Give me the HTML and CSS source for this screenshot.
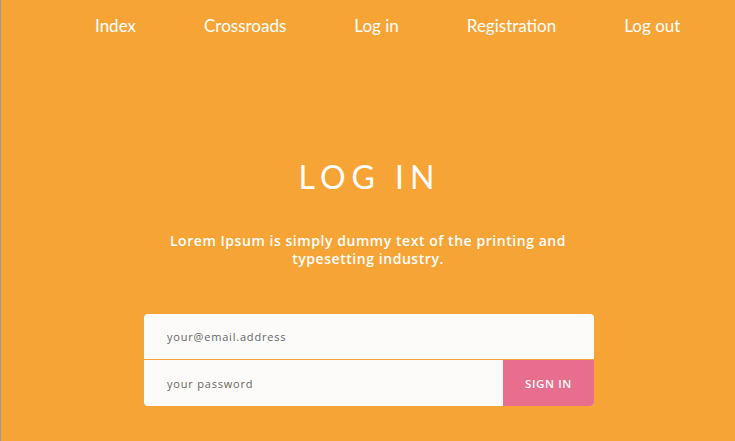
FILE: index.html
```html
<!DOCTYPE html>
<html lang="en">
<head>
<meta charset="utf-8">
<title>Log in</title>
<link rel="stylesheet" href="styles.css">
</head>
<body>
<div class="page">
  <nav class="nav">
    <a href="#">Index</a>
    <a href="#">Crossroads</a>
    <a href="#">Log in</a>
    <a href="#">Registration</a>
    <a href="#">Log out</a>
  </nav>
  <main class="main">
    <h1 class="title">LOG IN</h1>
    <p class="lead">Lorem Ipsum is simply dummy text of the printing and<br>typesetting industry.</p>
    <form class="form">
      <div class="row">
        <input class="field" type="email" placeholder="your@email.address">
      </div>
      <div class="row row-last">
        <input class="field" type="password" placeholder="your password">
        <button class="btn" type="button">SIGN IN</button>
      </div>
    </form>
  </main>
</div>
</body>
</html>
```
FILE: styles.css
```css
html, body {
  margin: 0;
  padding: 0;
  height: 100%;
}
body {
  background: #f7a436;
  font-family: "Lato", "Open Sans", sans-serif;
  color: #fff;
  overflow: hidden;
}
.page {
  min-height: 100%;
  border-left: 1px solid #9b9b9b;
  box-sizing: border-box;
}
.nav {
  display: flex;
  gap: 68px;
  padding: 16px 0 0 94px;
  height: 20px;
}
.nav a {
  color: #fff;
  text-decoration: none;
  font-size: 17px;
  line-height: 20px;
}
.main {
  display: flex;
  flex-direction: column;
  align-items: center;
}
.title {
  margin: 122px 0 0 3px;
  font-weight: 400;
  font-size: 32px;
  line-height: 38px;
  letter-spacing: 6px;
}
.lead {
  margin: 36px 0 0;
  text-align: center;
  font-family: "Open Sans", sans-serif;
  font-weight: 600;
  font-size: 14px;
  line-height: 18px;
  letter-spacing: 0.55px;
}
.form {
  margin: 46px 0 0 2px;
  width: 450px;
  background: #fdfbfa;
  border-radius: 4px;
  overflow: hidden;
}
.row {
  display: flex;
  height: 45px;
  border-bottom: 1px solid #f7a436;
}
.row-last {
  height: 46px;
  border-bottom: 0;
}
.field {
  flex: 1;
  border: 0;
  outline: 0;
  background: transparent;
  padding: 0 0 0 23px;
  font-family: "Open Sans", sans-serif;
  font-size: 11px;
  letter-spacing: 0.8px;
  color: #555;
}
.field::placeholder {
  color: #666;
}
.btn {
  width: 91px;
  border: 0;
  background: #e86e8e;
  color: #fff;
  font-family: "Open Sans", sans-serif;
  font-weight: 600;
  font-size: 11.5px;
  letter-spacing: 0.6px;
  padding: 0;
}
```
